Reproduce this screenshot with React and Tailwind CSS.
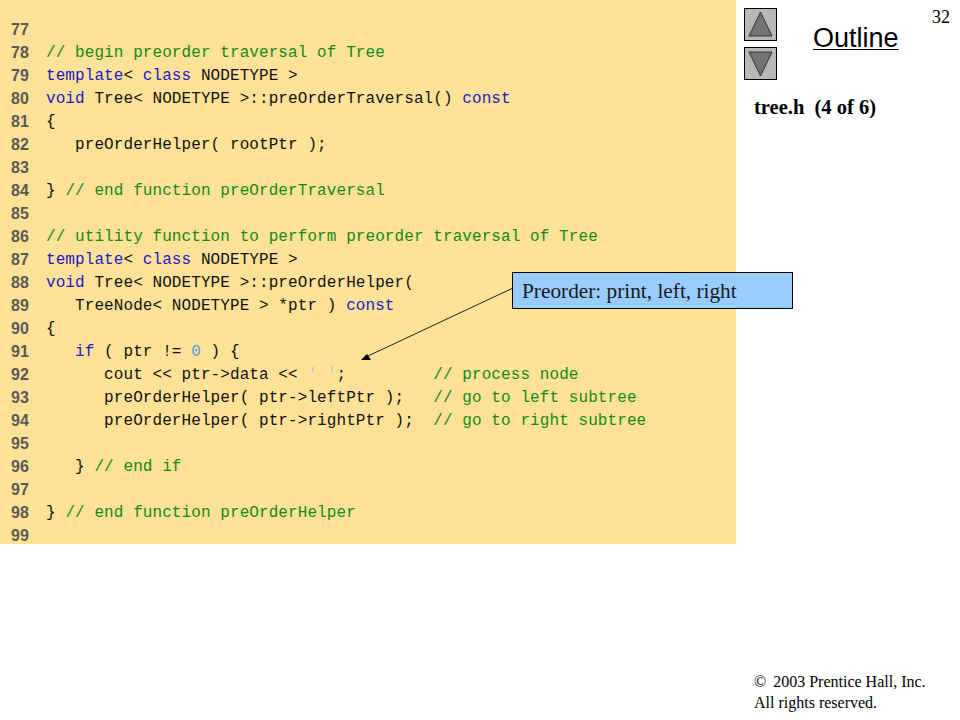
const G = ({ children }) => <span className="text-[#138a13]">{children}</span>
const B = ({ children }) => <span className="text-[#1a1ac8]">{children}</span>
const C = ({ children }) => <span className="text-[#4a9fe0]">{children}</span>

const lines = [
  [77, null],
  [78, <G>// begin preorder traversal of Tree</G>],
  [79, <><B>template</B>{"< "}<B>class</B>{" NODETYPE >"}</>],
  [80, <><B>void</B>{" Tree< NODETYPE >::preOrderTraversal() "}<B>const</B></>],
  [81, "{"],
  [82, "   preOrderHelper( rootPtr );"],
  [83, null],
  [84, <>{"} "}<G>// end function preOrderTraversal</G></>],
  [85, null],
  [86, <G>// utility function to perform preorder traversal of Tree</G>],
  [87, <><B>template</B>{"< "}<B>class</B>{" NODETYPE >"}</>],
  [88, <><B>void</B>{" Tree< NODETYPE >::preOrderHelper("}</>],
  [89, <>{"   TreeNode< NODETYPE > *ptr ) "}<B>const</B></>],
  [90, "{"],
  [91, <>{"   "}<B>if</B>{" ( ptr != "}<C>0</C>{" ) {"}</>],
  [92, <>{"      cout << ptr->data << "}<span className="text-[#a9cfe0]">' '</span>{";         "}<G>// process node</G></>],
  [93, <>{"      preOrderHelper( ptr->leftPtr );   "}<G>// go to left subtree</G></>],
  [94, <>{"      preOrderHelper( ptr->rightPtr );  "}<G>// go to right subtree</G></>],
  [95, null],
  [96, <>{"   } "}<G>// end if</G></>],
  [97, null],
  [98, <>{"} "}<G>// end function preOrderHelper</G></>],
  [99, null],
]

const NavButton = ({ points }) => (
  <div className="w-[33px] h-[33px] bg-[#b8b8b8] border border-black flex items-center justify-center">
    <svg width="27" height="29" viewBox="0 0 27 29">
      <polygon points={points} fill="#737373" stroke="#333333" strokeWidth="1" />
    </svg>
  </div>
)

export default function App() {
  return (
    <div className="relative w-[960px] h-[720px] bg-white overflow-hidden flex font-['Liberation_Serif',serif] text-black">
      <div className="w-[736px] h-[544px] bg-[#ffe298] pt-[18px] pl-[11px] shrink-0">
        {lines.map(([num, code]) => (
          <div key={num} className="flex h-[23px] items-center">
            <span className="w-[35px] shrink-0 font-['Liberation_Sans',sans-serif] font-bold text-[16px] text-[#5a5a55]">{num}</span>
            <span className="font-['Liberation_Mono',monospace] text-[16px] tracking-[0.08px] text-[#111111] whitespace-pre">{code}</span>
          </div>
        ))}
      </div>

      <div className="flex-1 flex flex-col">
        <div className="flex">
          <div className="flex flex-col gap-[6px] pt-[8px] pl-[8px]">
            <NavButton points="13.5,2 25,26 2,26" />
            <NavButton points="2,3 25,3 13.5,27" />
          </div>
          <div className="pt-[19px] pl-[36px]">
            <span className="font-['Liberation_Sans',sans-serif] text-[27px] leading-[38px] underline underline-offset-2 decoration-1">Outline</span>
          </div>
          <div className="ml-auto pt-[6px] pr-[10px] text-[18px] leading-[22px]">32</div>
        </div>
        <div className="pt-[15px] pl-[18px] text-[20.5px] leading-[24px] font-bold whitespace-pre">tree.h  (4 of 6)</div>
        <div className="mt-auto pl-[18px] pb-[7px] text-[16px] leading-[21px]">
          <div><span className="pr-[3px]">©</span> 2003 Prentice Hall, Inc.</div>
          <div>All rights reserved.</div>
        </div>
      </div>

      <svg className="absolute left-0 top-0 pointer-events-none" width="960" height="720">
        <line x1="513" y1="288" x2="368" y2="356" stroke="#222222" strokeWidth="1" />
        <polygon points="361,360 371,360 367,354" fill="#000000" />
      </svg>
      <div className="absolute left-[512px] top-[272px] w-[281px] h-[37px] bg-[#99ccff] border border-black pl-[9px] text-[21.3px] leading-[36px] text-[#1a1a1a]">
        Preorder: print, left, right
      </div>
    </div>
  )
}
